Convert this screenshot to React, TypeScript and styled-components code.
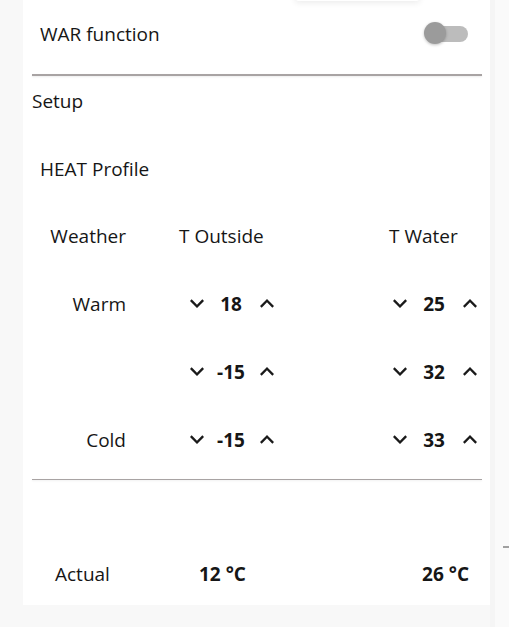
import React from "react"
import styled, { createGlobalStyle } from "styled-components"

const GlobalStyle = createGlobalStyle`
  body {
    margin: 0;
    background: #f8f8f8;
    font-family: "Open Sans", "Noto Sans", sans-serif;
    color: #161616;
  }
`

type Row = {
  label: string
  outside: number
  water: number
}

const rows: Row[] = [
  { label: "Warm", outside: 18, water: 25 },
  { label: "", outside: -15, water: 32 },
  { label: "Cold", outside: -15, water: 33 },
]

const ChevronDown = () => (
  <svg width="14" height="9" viewBox="6 8.3 12 7.7" fill="#1a1a1a">
    <path d="M16.59 8.59L12 13.17 7.41 8.59 6 10l6 6 6-6z" />
  </svg>
)

const ChevronUp = () => (
  <svg width="14" height="9" viewBox="6 8 12 7.7" fill="#1a1a1a">
    <path d="M12 8l-6 6 1.41 1.41L12 10.83l4.59 4.58L18 14z" />
  </svg>
)

const Stepper = ({ value, offset }: { value: number; offset: number }) => (
  <StepperBox $offset={offset}>
    <IconButton>
      <ChevronDown />
    </IconButton>
    <Value>{value}</Value>
    <IconButton>
      <ChevronUp />
    </IconButton>
  </StepperBox>
)

export default function App() {
  return (
    <>
      <GlobalStyle />
      <Page>
        <Card>
          <Popover />
          <ToggleRow>
            <span>WAR function</span>
            <Switch>
              <Track />
              <Thumb />
            </Switch>
          </ToggleRow>
          <Divider />
          <Section>Setup</Section>
          <Title>HEAT Profile</Title>
          <Grid>
            <LabelCell>Weather</LabelCell>
            <HeadCell>T Outside</HeadCell>
            <HeadCell>T Water</HeadCell>
            {rows.map((r, i) => (
              <React.Fragment key={i}>
                <LabelCell>{r.label}</LabelCell>
                <Cell>
                  <Stepper value={r.outside} offset={11} />
                </Cell>
                <Cell>
                  <Stepper value={r.water} offset={4} />
                </Cell>
              </React.Fragment>
            ))}
          </Grid>
          <Divider />
          <ActualRow>
            <ActualLabel>Actual</ActualLabel>
            <ActualValue>12 °C</ActualValue>
            <ActualValue $right>26 °C</ActualValue>
          </ActualRow>
        </Card>
        <Gutter />
        <SidePane>
          <SideRule />
        </SidePane>
      </Page>
    </>
  )
}

const Page = styled.div`
  display: flex;
  height: 627px;
  overflow: hidden;
  padding-left: 23px;
`

const Card = styled.div`
  position: relative;
  width: 467px;
  height: 605px;
  background: #fff;
  display: flex;
  flex-direction: column;
`

const Popover = styled.div`
  position: absolute;
  left: 272px;
  top: -40px;
  width: 125px;
  height: 41px;
  background: #fff;
  border-radius: 4px;
  box-shadow: 0 2px 6px rgba(0, 0, 0, 0.08);
`

const Gutter = styled.div`
  width: 5px;
  background: #f5f5f5;
`

const SidePane = styled.div`
  flex: 1;
  background: #fafafa;
  padding-top: 546px;
  padding-left: 8px;
`

const SideRule = styled.div`
  height: 1.5px;
  background: #a0a0a0;
`

const ToggleRow = styled.div`
  height: 74px;
  display: flex;
  align-items: center;
  justify-content: space-between;
  padding: 0 22px 6px 17px;
  box-sizing: border-box;
  font-size: 19px;
`

const Switch = styled.div`
  position: relative;
  width: 44px;
  height: 24px;
`

const Track = styled.div`
  position: absolute;
  left: 5px;
  right: 0;
  top: 4px;
  height: 16px;
  border-radius: 8px;
  background: #bcbcbc;
`

const Thumb = styled.div`
  position: absolute;
  left: 0;
  top: 0;
  width: 22px;
  height: 22px;
  border-radius: 50%;
  background: #9b9b9b;
  box-shadow: 0 1px 3px rgba(0, 0, 0, 0.25);
`

const Divider = styled.div`
  margin: 0 8px 0 9px;
  height: 1.5px;
  background: #a8a3a3;
  box-shadow: 0 1px 2px rgba(0, 0, 0, 0.08);
`

const Section = styled.div`
  height: 50px;
  display: flex;
  align-items: center;
  padding-left: 9px;
  font-size: 19px;
`

const Title = styled.div`
  height: 76px;
  padding: 30px 0 0 17px;
  box-sizing: border-box;
  font-size: 19px;
`

const Grid = styled.div`
  display: grid;
  grid-template-columns: 156px 210px 1fr;
  grid-auto-rows: 68px;
  align-items: center;
  font-size: 19px;
  margin-bottom: 5px;
`

const LabelCell = styled.div`
  text-align: right;
  padding-right: 53px;
`

const HeadCell = styled.div``

const Cell = styled.div``

const StepperBox = styled.div<{ $offset: number }>`
  display: flex;
  align-items: center;
  margin-left: ${(p) => p.$offset}px;
`

const IconButton = styled.span`
  display: flex;
  align-items: center;
`

const Value = styled.span`
  min-width: 30px;
  margin: 0 14px 0 12px;
  text-align: center;
  font-weight: 700;
`

const ActualRow = styled.div`
  margin-top: auto;
  height: 60px;
  display: grid;
  grid-template-columns: 144px 1fr auto;
  align-items: center;
  padding: 0 21px 1px 32px;
  font-size: 19px;
`

const ActualLabel = styled.span``

const ActualValue = styled.span<{ $right?: boolean }>`
  font-weight: 700;
  text-align: ${(p) => (p.$right ? "right" : "left")};
`
